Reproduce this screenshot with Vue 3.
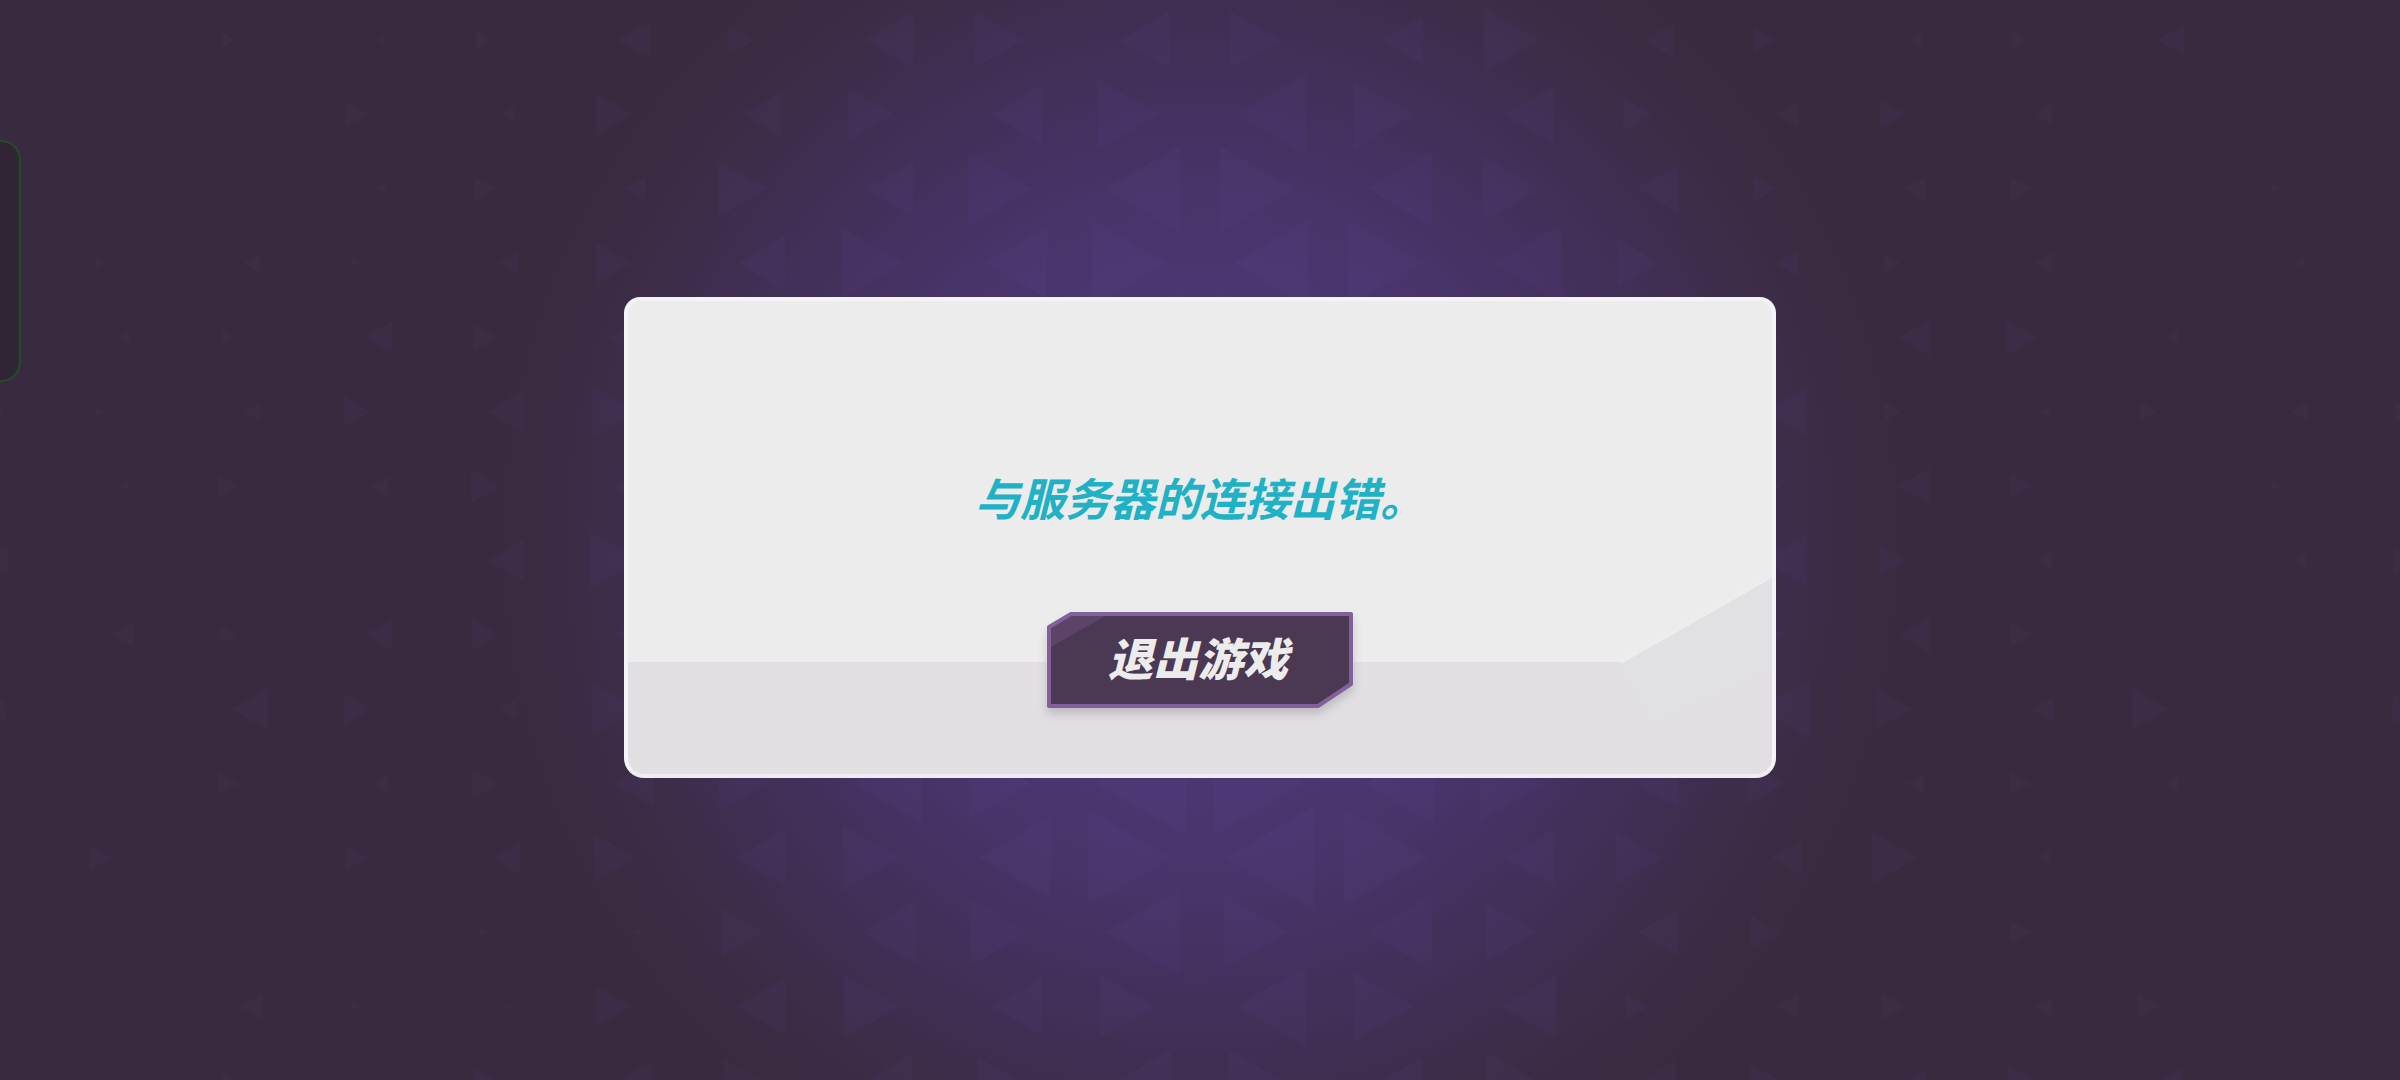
<script setup>
// Each row lists the triangle sizes from left to right, starting with a left-pointing one.
const rowPitch = 74.35
const cell = 256
const rows = [
  [0, 14, 7, 17, 33, 28, 49, 48, 50, 50, 43, 56, 31, 21, 12, 15, 27, 0],
  [0, 0, 0, 22, 14, 37, 38, 45, 53, 62, 70, 60, 50, 29, 23, 25, 17, 0],
  [0, 0, 11, 19, 19, 48, 48, 65, 75, 75, 66, 58, 42, 24, 19, 19, 0, 6],
  [0, 8, 16, 7, 20, 36, 48, 62, 62, 75, 75, 75, 68, 42, 24, 16, 18, 0, 8, 0],
  [10, 13, 28, 24, 48, 50, 60, 70, 80, 80, 70, 60, 50, 30, 32, 32, 12, 0],
  [12, 8, 15, 27, 38, 45, 60, 70, 80, 80, 80, 70, 60, 50, 44, 17, 10, 17, 17, 18],
  [8, 19, 17, 29, 40, 50, 60, 70, 80, 80, 70, 60, 50, 30, 32, 20, 0, 8],
  [26, 5, 0, 0, 37, 50, 60, 70, 80, 80, 80, 70, 60, 50, 44, 28, 16, 0, 14, 22],
  [20, 15, 27, 28, 40, 50, 60, 70, 80, 80, 70, 60, 50, 40, 31, 20, 4, 0],
  [18, 0, 37, 28, 17, 46, 60, 70, 80, 80, 80, 70, 60, 60, 52, 36, 20, 37, 0, 25],
  [0, 20, 16, 26, 40, 48, 70, 62, 90, 90, 70, 66, 44, 36, 17, 20, 14, 0],
  [0, 21, 0, 21, 28, 42, 50, 58, 72, 84, 90, 84, 50, 46, 30, 45, 12, 0],
  [0, 0, 5, 6, 9, 42, 55, 58, 75, 64, 65, 50, 40, 30, 0, 20, 0, 0],
  [6, 0, 23, 7, 5, 34, 50, 55, 50, 55, 70, 60, 55, 23, 21, 24, 17, 21, 0, 7],
  [0, 13, 0, 22, 34, 38, 46, 42, 55, 55, 40, 50, 36, 30, 20, 28, 22, 0]
]

const triangles = rows.flatMap((sizes, r) => {
  const y = 40 + r * rowPitch
  const start = r % 2 === 0 ? 176 : 48
  return sizes
    .map((h, i) => {
      const dir = i % 2 === 0 ? -1 : 1
      const cx = start + Math.floor(i / 2) * cell + dir * (51 - h / 12)
      const base = cx - (dir * h) / 3
      const half = h * 0.577
      return { h, points: `${base},${y - half} ${base + dir * h},${y} ${base},${y + half}` }
    })
    .filter((t) => t.h > 0)
})
</script>

<template>
  <main class="stage">
    <svg class="backdrop" viewBox="0 0 2400 1080" preserveAspectRatio="xMidYMid slice" aria-hidden="true">
      <defs>
        <radialGradient id="glow" gradientUnits="userSpaceOnUse" cx="1200" cy="540" r="710">
          <stop offset="0.3" stop-color="#4b3773" />
          <stop offset="0.46" stop-color="#49356c" />
          <stop offset="0.62" stop-color="#43315e" />
          <stop offset="0.78" stop-color="#3e2e4f" />
          <stop offset="0.9" stop-color="#3b2c44" />
          <stop offset="1" stop-color="#392b3f" />
        </radialGradient>
      </defs>
      <rect width="2400" height="1080" fill="url(#glow)" />
      <g class="tri">
        <polygon v-for="(t, i) in triangles" :key="i" :points="t.points" />
      </g>
    </svg>

    <aside class="edge-handle" aria-hidden="true"></aside>

    <section class="dialog" role="alertdialog" aria-labelledby="message">
      <svg class="wedge" viewBox="0 0 154 156" aria-hidden="true">
        <defs>
          <linearGradient id="fade" gradientUnits="userSpaceOnUse" x1="70" y1="40" x2="110" y2="130">
            <stop offset="0" stop-color="#e1e1e3" />
            <stop offset="0.5" stop-color="#e1e1e3" />
            <stop offset="1" stop-color="#e1dfe2" />
          </linearGradient>
        </defs>
        <polygon points="0,86 4,85 154,0 154,94 42,156" fill="url(#fade)" />
        <path d="M3 84 154 -2" stroke="#ededee" stroke-width="3" fill="none" />
      </svg>
      <p id="message" class="message">与服务器的连接出错。</p>
      <footer class="actions">
        <button type="button" class="quit">
          <svg class="plate" viewBox="0 0 306 96" aria-hidden="true">
            <path d="M2 15 24 2H304V72L271 94H2Z" fill="#4b3852" />
            <path d="M2 15 24 2H62L2 36Z" fill="#5c4469" />
            <path d="M2 15 24 2H304V72L271 94H2Z" fill="none" stroke="#81609b" stroke-width="4" stroke-linejoin="round" />
          </svg>
          <span class="label">退出游戏</span>
        </button>
      </footer>
    </section>
  </main>
</template>

<style>
body {
  margin: 0;
  background: #392b3f;
}
</style>

<style scoped>
.stage {
  position: relative;
  display: flex;
  align-items: center;
  justify-content: center;
  box-sizing: border-box;
  min-height: 100vh;
  padding-bottom: 6px;
  overflow: hidden;
  font-family: "Noto Sans CJK SC", "Noto Sans", sans-serif;
}

.backdrop {
  position: absolute;
  inset: 0;
  width: 100%;
  height: 100%;
}

.tri {
  fill: rgba(107, 80, 168, 0.07);
}

.edge-handle {
  position: absolute;
  left: 0;
  top: 140px;
  box-sizing: border-box;
  width: 21px;
  height: 242px;
  border: 2px solid #264a30;
  border-left: 0;
  border-radius: 0 20px 20px 0;
  background: linear-gradient(to right, #312435 12px, #2a2a30 16px);
}

.dialog {
  position: relative;
  box-sizing: border-box;
  width: 48%;
  min-width: 520px;
  border: 4px solid #f4f3f7;
  border-bottom-color: #efedf3;
  border-radius: 16px 16px 20px 20px;
  background: #ececec;
}

.wedge {
  position: absolute;
  right: 0;
  bottom: 40px;
  z-index: 1;
  width: 154px;
  height: 156px;
}

.message {
  margin: 0;
  padding: 166px 24px 132px;
  color: #1fb1c6;
  font-size: 45px;
  font-style: italic;
  font-weight: 700;
  line-height: 60px;
  text-align: center;
}

.actions {
  display: flex;
  justify-content: center;
  padding-bottom: 66px;
  border-top: 3px solid #eeecef;
  border-radius: 0 0 16px 16px;
  background: #e1dfe2;
}

.quit {
  position: relative;
  z-index: 2;
  width: 306px;
  height: 96px;
  margin: -50px 0 0;
  padding: 0 4px 6px 0;
  border: 0;
  background: none;
  color: #ececec;
  font: italic 900 45px/60px "Noto Sans CJK SC", "Noto Sans", sans-serif;
  cursor: pointer;
}

.plate {
  position: absolute;
  inset: 0;
  width: 100%;
  height: 100%;
  filter: drop-shadow(0 6px 4px rgba(60, 50, 70, 0.2));
}

.label {
  position: relative;
}
</style>
